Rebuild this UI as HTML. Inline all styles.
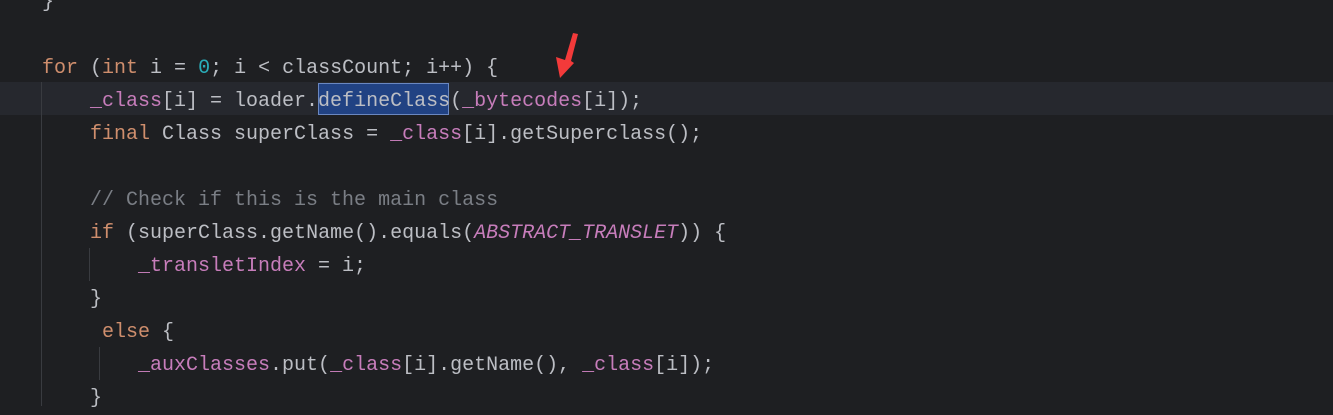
<!DOCTYPE html>
<html><head><meta charset="utf-8"><style>
body{margin:0;width:1333px;height:406px;background:#1e1f22;overflow:hidden;position:relative;font-family:"Liberation Mono","DejaVu Sans Mono",monospace;font-size:20px;color:#bcbec4}
.l{position:absolute;left:42px;height:33px;line-height:33px;white-space:pre;margin-top:2px}
.k{color:#cf8e6d}.f{color:#c77dbb}.n{color:#2aacb8}.c{color:#7a7e85}.it{color:#c77dbb;font-style:italic}
.g{position:absolute;width:1px;background:#393b40}
</style></head><body>
<div style="position:absolute;left:0;top:82px;width:1333px;height:33px;background:#26282e"></div>
<div style="position:absolute;left:318px;top:83px;width:129px;height:30px;background:#214283;border:1px solid #6a87c0"></div>
<div class="g" style="left:41px;top:82px;height:324px"></div>
<div class="g" style="left:89px;top:248px;height:33px"></div>
<div class="g" style="left:99px;top:347px;height:33px"></div>
<div class="l" style="top:-16px">}</div>
<div class="l" style="top:50px"><span class="k">for</span> (<span class="k">int</span> i = <span class="n">0</span>; i &lt; classCount; i++) {</div>
<div class="l" style="top:83px">    <span class="f">_class</span>[i] = loader.defineClass(<span class="f">_bytecodes</span>[i]);</div>
<div class="l" style="top:116px">    <span class="k">final</span> Class superClass = <span class="f">_class</span>[i].getSuperclass();</div>
<div class="l" style="top:182px">    <span class="c">// Check if this is the main class</span></div>
<div class="l" style="top:215px">    <span class="k">if</span> (superClass.getName().equals(<span class="it">ABSTRACT_TRANSLET</span>)) {</div>
<div class="l" style="top:248px">        <span class="f">_transletIndex</span> = i;</div>
<div class="l" style="top:281px">    }</div>
<div class="l" style="top:314px">     <span class="k">else</span> {</div>
<div class="l" style="top:347px">        <span class="f">_auxClasses</span>.put(<span class="f">_class</span>[i].getName(), <span class="f">_class</span>[i]);</div>
<div class="l" style="top:380px">    }</div>
<svg style="position:absolute;left:0;top:0" width="1333" height="406"><polygon points="573,33 578,34 571,61 574,63 560,78 556,57 565,60" fill="#f33a3a"/></svg>
</body></html>
